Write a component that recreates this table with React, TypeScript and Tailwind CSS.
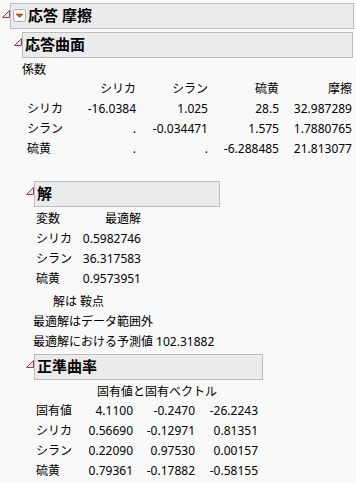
import React from "react";

const Tri = () => (
  <svg width="8" height="8" className="block">
    <polygon points="0.5,7.5 7.5,7.5 7.5,0.5" fill="#f4e0e4" stroke="#8c4456" strokeWidth="1" />
  </svg>
);

const MenuButton = () => (
  <svg width="13" height="13" className="block shrink-0">
    <rect x="0.5" y="0.5" width="12" height="12" rx="2" fill="#fbfcfd" stroke="#9fb2c6" />
    <polygon points="3,5 10,5 6.5,8.5" fill="#c8601a" stroke="#8a3c0c" strokeWidth="0.6" />
  </svg>
);

function Header({ width, children }: { width: string; children: React.ReactNode }) {
  return (
    <div className={`${width} h-[26px] border border-[#bdbdbd] bg-[#eaebea] flex items-center pl-[2px] pb-[2px]`}>
      {children}
    </div>
  );
}

const coefHeader = ["", "シリカ", "シラン", "硫黄", "摩擦"];
const coefRows = [
  ["シリカ", "-16.0384", "1.025", "28.5", "32.987289"],
  ["シラン", ".", "-0.034471", "1.575", "1.7880765"],
  ["硫黄", ".", ".", "-6.288485", "21.813077"],
];

const solRows = [
  ["シリカ", "0.5982746"],
  ["シラン", "36.317583"],
  ["硫黄", "0.9573951"],
];

const eigenRows = [
  ["固有値", "4.1100", "-0.2470", "-26.2243"],
  ["シリカ", "0.56690", "-0.12971", "0.81351"],
  ["シラン", "0.22090", "0.97530", "0.00157"],
  ["硫黄", "0.79361", "-0.17882", "-0.58155"],
];

export default function App() {
  return (
    <div className="w-[356px] h-[483px] overflow-hidden bg-[#f9f9f9] text-[12px] text-black font-['Noto_Sans','Noto_Sans_CJK_JP',sans-serif]">
      {/* report title */}
      <div className="flex pl-[2px] pt-[3px]">
        <div className="w-[8px] pt-[7px]">
          <Tri />
        </div>
        <Header width="w-[344px]">
          <MenuButton />
          <span className="ml-[2px] text-[15px] font-bold leading-none">応答 摩擦</span>
        </Header>
      </div>

      {/* response surface */}
      <div className="flex pl-[14px] mt-[3px]">
        <div className="w-[8px] pt-[6px]">
          <Tri />
        </div>
        <Header width="w-[331px]">
          <span className="text-[15px] font-bold leading-none">応答曲面</span>
        </Header>
      </div>

      <div className="pl-[22px] mt-[2px]">
        <div className="h-[19px] leading-[19px]">係数</div>
        <div className="ml-[5px] grid grid-cols-[43px_66px_72px_71px_73px] leading-[20px]">
          {coefHeader.map((h, i) => (
            <div key={"h" + i} className={i === 0 ? "" : "text-right"}>
              {h}
            </div>
          ))}
          {coefRows.map((row) =>
            row.map((c, i) => (
              <div key={row[0] + i} className={i === 0 ? "" : "text-right"}>
                {c}
              </div>
            ))
          )}
        </div>
      </div>

      {/* solution */}
      <div className="flex pl-[26px] mt-[22px]">
        <div className="w-[8px] pt-[6px]">
          <Tri />
        </div>
        <Header width="w-[186px]">
          <span className="text-[15px] font-bold leading-none">解</span>
        </Header>
      </div>
      <div className="pl-[36px] mt-[2px] leading-[20px]">
        <div className="grid grid-cols-[45px_60px]">
          <div>変数</div>
          <div className="text-right">最適解</div>
          {solRows.map((r) => (
            <React.Fragment key={r[0]}>
              <div>{r[0]}</div>
              <div className="text-right">{r[1]}</div>
            </React.Fragment>
          ))}
        </div>
      </div>
      <div className="pl-[33px] mt-[3px] leading-[20px]">
        <div className="pl-[20px]">解は 鞍点</div>
        <div>最適解はデータ範囲外</div>
        <div>最適解における予測値 102.31882</div>
      </div>

      {/* canonical curvature */}
      <div className="flex pl-[26px] mt-[2px]">
        <div className="w-[8px] pt-[6px]">
          <Tri />
        </div>
        <Header width="w-[229px]">
          <span className="text-[15px] font-bold leading-none">正準曲率</span>
        </Header>
      </div>
      <div className="pl-[36px] mt-[2px]">
        <div className="pl-[61px] h-[19px] leading-[19px]">固有値と固有ベクトル</div>
        <div className="grid grid-cols-[42px_55px_62px_63px] leading-[20px]">
          {eigenRows.map((row) =>
            row.map((c, i) => (
              <div key={row[0] + i} className={i === 0 ? "" : "text-right"}>
                {c}
              </div>
            ))
          )}
        </div>
      </div>
    </div>
  );
}
